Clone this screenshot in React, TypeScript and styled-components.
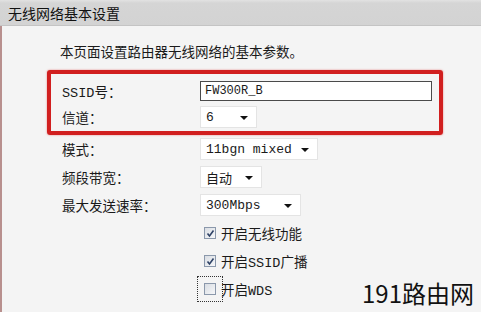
import React from 'react'
import styled, { createGlobalStyle } from 'styled-components'

const GlobalStyle = createGlobalStyle`
  html, body {
    margin: 0;
    padding: 0;
    background: #f4f4f4;
  }
`

const CJK = `"Noto Sans CJK SC", "Noto Sans", sans-serif`
const MONO = `"Liberation Mono", "Noto Sans CJK SC", monospace`

const Page = styled.div`
  position: relative;
  width: 481px;
  height: 312px;
  overflow: hidden;
  background: #f4f4f4;
  font-family: ${CJK};
  color: #1a1a1a;
`

const Header = styled.div`
  height: 26px;
  box-sizing: border-box;
  padding-left: 8px;
  display: flex;
  align-items: center;
  background: linear-gradient(#e2e2e2 0, #d5d5d5 3px, #d3d3d3 100%);
  border-bottom: 1px solid #c4c4c4;
  font-size: 14px;
  color: #111;
`

const Body = styled.div`
  height: 286px;
  box-sizing: border-box;
  border-left: 2px solid #b8908e;
  padding: 15px 0 0 45px;
`

const Desc = styled.div`
  margin-left: 13px;
  height: 20px;
  line-height: 20px;
  font-size: 13.5px;
`

const Highlight = styled.div`
  width: 396px;
  box-sizing: border-box;
  margin-top: 9px;
  border: 4px solid #d11f1f;
  border-radius: 3px;
  box-shadow: 0 0 2px rgba(220, 40, 40, 0.6);
  padding: 4px 0 1px 11px;
`

const Row = styled.div<{ $h: number }>`
  display: grid;
  grid-template-columns: 138px 1fr;
  align-items: center;
  height: ${(p) => p.$h}px;
`

const Rows = styled.div`
  padding-left: 15px;
`

const Label = styled.div`
  font-size: 13.5px;
  font-family: ${MONO};
`

const TextInput = styled.div`
  width: 232px;
  height: 20px;
  box-sizing: border-box;
  border: 1px solid #4a4a4a;
  background: #fff;
  font-family: ${MONO};
  font-size: 12px;
  line-height: 18px;
  padding-left: 4px;
`

const Select = styled.div<{ $w: number }>`
  width: ${(p) => p.$w}px;
  height: 22px;
  box-sizing: border-box;
  display: flex;
  align-items: center;
  justify-content: space-between;
  padding: 0 8px 0 5px;
  background: #fff;
  border: 1px solid #e4e4e4;
  font-family: ${MONO};
  font-size: 13px;
`

const Arrow = styled.span`
  width: 0;
  height: 0;
  border-left: 4px solid transparent;
  border-right: 4px solid transparent;
  border-top: 4px solid #111;
  margin-top: 2px;
`

const CheckRow = styled.div`
  display: flex;
  align-items: center;
  height: 28px;
  padding-left: 157px;
  font-size: 13.5px;
  font-family: ${MONO};
`

const Box = styled.span<{ $focus?: boolean }>`
  width: 12px;
  height: 12px;
  box-sizing: border-box;
  border: 1px solid #8b98ab;
  background: linear-gradient(135deg, #d9dde3, #f6f7f9);
  display: inline-flex;
  align-items: center;
  justify-content: center;
  margin-right: 5px;
  outline: ${(p) => (p.$focus ? '1px dotted #333' : 'none')};
  outline-offset: 6px;
`

const Watermark = styled.div`
  position: absolute;
  right: 7px;
  bottom: 6px;
  font-family: ${CJK};
  font-size: 24px;
  line-height: 26px;
  color: #111;
`

function Check({ checked, focus }: { checked?: boolean; focus?: boolean }) {
  return (
    <Box $focus={focus}>
      {checked && (
        <svg width="9" height="9" viewBox="0 0 9 9">
          <path d="M1.5 4.5 L3.5 7 L7.5 1.5" stroke="#2f4266" strokeWidth="1.6" fill="none" />
        </svg>
      )}
    </Box>
  )
}

export default function App() {
  return (
    <Page>
      <GlobalStyle />
      <Header>无线网络基本设置</Header>
      <Body>
        <Desc>本页面设置路由器无线网络的基本参数。</Desc>
        <Highlight>
          <Row $h={26}>
            <Label>SSID号：</Label>
            <TextInput>FW300R_B</TextInput>
          </Row>
          <Row $h={26}>
            <Label>信道：</Label>
            <Select $w={57}>
              6<Arrow />
            </Select>
          </Row>
        </Highlight>
        <Rows>
          <Row $h={28}>
            <Label>模式：</Label>
            <Select $w={118}>
              11bgn mixed<Arrow />
            </Select>
          </Row>
          <Row $h={28}>
            <Label>频段带宽：</Label>
            <Select $w={62}>
              自动<Arrow />
            </Select>
          </Row>
          <Row $h={28}>
            <Label>最大发送速率：</Label>
            <Select $w={101}>
              300Mbps<Arrow />
            </Select>
          </Row>
        </Rows>
        <CheckRow>
          <Check checked />
          开启无线功能
        </CheckRow>
        <CheckRow>
          <Check checked />
          开启SSID广播
        </CheckRow>
        <CheckRow>
          <Check focus />
          开启WDS
        </CheckRow>
      </Body>
      <Watermark>191路由网</Watermark>
    </Page>
  )
}
